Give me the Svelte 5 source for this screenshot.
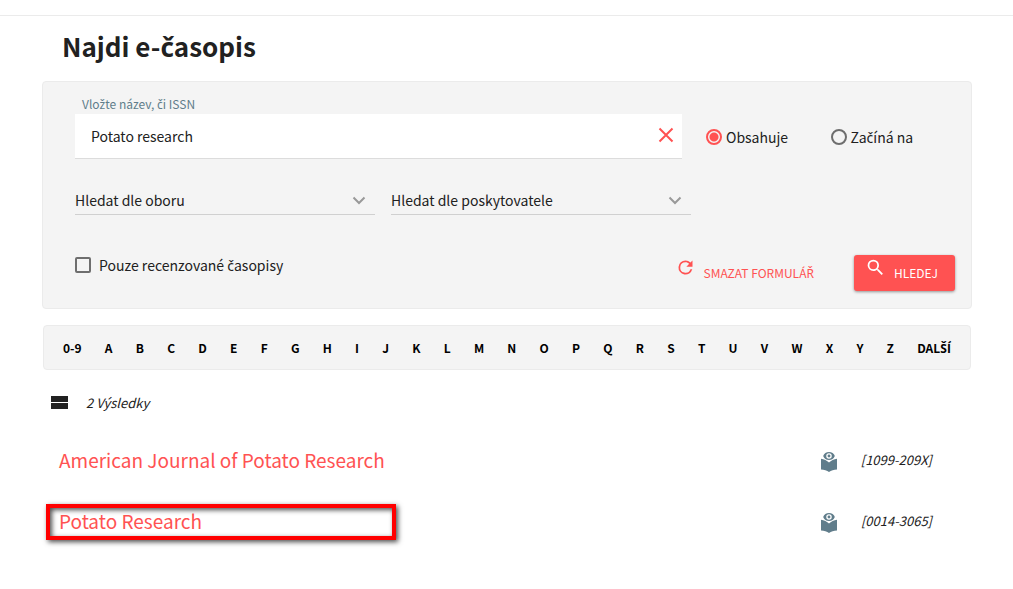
<script lang="ts">
  const letters = ['0-9', ...'ABCDEFGHIJKLMNOPQRSTUVWXYZ', 'DALŠÍ'];

  const results = [
    { title: 'American Journal of Potato Research', issn: '1099-209X', marked: false },
    { title: 'Potato Research', issn: '0014-3065', marked: true }
  ];

  let query = $state('Potato research');
  let mode = $state('contains');
  let field = $state('');
  let provider = $state('');
  let peerReviewed = $state(false);

  // The main font has no letters with a caron, so those get their own family
  const splitCarons = (text: string) => text.split(/([čďěňřšťžČĎĚŇŘŠŤŽ])/);

  function clearForm() {
    query = '';
    mode = 'contains';
    field = '';
    provider = '';
    peerReviewed = false;
  }
</script>

{#snippet czech(text: string)}
  <span>{#each splitCarons(text) as part, i}{#if i % 2}<span class="caron">{part}</span>{:else}{part}{/if}{/each}</span>
{/snippet}

<div class="topline"></div>

<main>
  <h1>{@render czech('Najdi e-časopis')}</h1>

  <form class="panel" onsubmit={(e) => e.preventDefault()}>
    <label class="query-label" for="query">{@render czech('Vložte název, či ISSN')}</label>
    <div class="query-row">
      <div class="query-field">
        <input id="query" type="text" bind:value={query} />
        <button type="button" class="clear" aria-label="Vymazat" onclick={() => (query = '')}>
          <svg width="24" height="24" viewBox="0 0 24 24">
            <path d="M5.5 5.5l13 13M18.5 5.5l-13 13" fill="none" stroke="currentColor" stroke-width="2" />
          </svg>
        </button>
      </div>
      <div class="modes">
        <label class="choice">
          <input type="radio" name="mode" value="contains" bind:group={mode} />
          {@render czech('Obsahuje')}
        </label>
        <label class="choice">
          <input type="radio" name="mode" value="starts" bind:group={mode} />
          {@render czech('Začíná na')}
        </label>
      </div>
    </div>

    <div class="selects">
      <div class="select-wrap">
        <select bind:value={field} aria-label="Hledat dle oboru">
          <option value="">Hledat dle oboru</option>
        </select>
        <svg class="chevron" width="14" height="9" viewBox="0 0 14 9">
          <path d="M1.5 1.5L7 7l5.5-5.5" fill="none" stroke="currentColor" stroke-width="2" />
        </svg>
      </div>
      <div class="select-wrap">
        <select bind:value={provider} aria-label="Hledat dle poskytovatele">
          <option value="">Hledat dle poskytovatele</option>
        </select>
        <svg class="chevron" width="14" height="9" viewBox="0 0 14 9">
          <path d="M1.5 1.5L7 7l5.5-5.5" fill="none" stroke="currentColor" stroke-width="2" />
        </svg>
      </div>
    </div>

    <div class="actions">
      <label class="check">
        <input type="checkbox" bind:checked={peerReviewed} />
        {@render czech('Pouze recenzované časopisy')}
      </label>
      <button type="button" class="btn" onclick={clearForm}>
        <svg width="21" height="21" viewBox="0 0 24 24">
          <path fill="currentColor" d="M17.65 6.35A7.96 7.96 0 0 0 12 4a8 8 0 1 0 7.73 10h-2.08A6 6 0 1 1 12 6c1.66 0 3.14.69 4.22 1.78L13 11h7V4l-2.35 2.35z" />
        </svg>
        <span class="btn-text">{@render czech('SMAZAT FORMULÁŘ')}</span>
      </button>
      <button type="submit" class="btn primary">
        <svg width="21" height="21" viewBox="0 0 24 24">
          <path fill="currentColor" d="M15.5 14h-.79l-.28-.27A6.47 6.47 0 0 0 16 9.5 6.5 6.5 0 1 0 9.5 16c1.61 0 3.09-.59 4.23-1.57l.27.28v.79l5 4.99L20.49 19l-4.99-5zm-6 0a4.5 4.5 0 1 1 0-9 4.5 4.5 0 0 1 0 9z" />
        </svg>
        <span class="btn-text">HLEDEJ</span>
      </button>
    </div>
  </form>

  <nav class="letters">
    {#each letters as letter}
      <a href="#{letter}">{@render czech(letter)}</a>
    {/each}
  </nav>

  <div class="summary">
    <svg width="17" height="15" viewBox="0 0 17 15">
      <path d="M0 0h17v6H0zM0 7h17v6H0z" fill="#212121" />
    </svg>
    <em>2 Výsledky</em>
  </div>

  <ul class="results">
    {#each results as result}
      <li class:marked={result.marked}>
        <a href="#{result.issn}">{result.title}</a>
        <svg width="16" height="20" viewBox="0 0 16 20">
          <path d="M8 0C5.2 0 3.1 1.6 2.2 4 3.1 6.4 5.2 8 8 8s4.900-1.600 5.800-4C12.900 1.600 10.800 0 8 0z" fill="#607d8b" />
          <circle cx="8" cy="4" r="2.1" fill="#607d8b" stroke="#fff" stroke-width="1.3" />
          <path d="M0 6.800c3 .4 6 1.800 8 3.800 2-2 5-3.400 8-3.800v10.700c-3 .3-6 1.200-8 2.500-2-1.300-5-2.200-8-2.500z" fill="#607d8b" />
        </svg>
        <em>[{result.issn}]</em>
      </li>
    {/each}
  </ul>
</main>

<style>
  :global(body) {
    background: #fff;
    color: #212121;
    font-family: 'Noto Sans CJK JP', 'Noto Sans', sans-serif;
    font-size: 14px;
    line-height: 20px;
  }

  .caron {
    font-family: 'Noto Sans', sans-serif;
    line-height: 1;
  }

  .topline {
    height: 15px;
    border-bottom: 1px solid #ebebeb;
  }

  main {
    padding: 0 41px 0 42px;
  }

  h1 {
    margin: 0;
    padding: 10px 20px 15px;
    font-size: 26px;
    line-height: 40px;
    font-weight: 700;
  }

  .panel {
    padding: 12px 16px 17px 32px;
    background: #f4f4f4;
    border: 1px solid #ebebeb;
    border-radius: 4px;
  }

  input,
  select,
  button {
    font: inherit;
    color: inherit;
    margin: 0;
  }

  .query-label {
    display: block;
    padding: 0 7px 1px;
    font-size: 12px;
    line-height: 19px;
    color: #607d8b;
  }

  .query-row {
    display: flex;
    align-items: center;
    gap: 24px;
  }

  .query-field {
    display: flex;
    flex: 1;
    align-items: center;
    height: 44px;
    background: #fff;
    border-bottom: 1px solid #dcdcdc;
  }

  .query-field input {
    flex: 1;
    min-width: 0;
    padding: 0 16px;
    border: 0;
    outline: 0;
    background: none;
  }

  .clear {
    display: flex;
    padding: 0 4px 2px;
    border: 0;
    background: none;
    color: #ff5252;
    cursor: pointer;
  }

  .modes {
    display: grid;
    grid-template-columns: 1fr 1fr;
    width: 249px;
  }

  .choice,
  .check {
    display: flex;
    align-items: center;
  }

  .choice {
    gap: 4px;
  }

  .check {
    flex: 1;
    align-self: flex-start;
    gap: 8px;
  }

  input[type='radio'],
  input[type='checkbox'] {
    appearance: none;
    width: 16px;
    height: 16px;
    border: 2px solid #6e6e6e;
    border-radius: 2px;
  }

  input[type='radio'] {
    border-radius: 50%;
  }

  input[type='radio']:checked {
    border-color: #ff5252;
    background: radial-gradient(circle, #ff5252 4px, transparent 5px);
  }

  input[type='checkbox']:checked {
    border-color: #ff5252;
    background: #ff5252;
  }

  .selects {
    display: flex;
    gap: 16px;
    margin-top: 27px;
  }

  .select-wrap {
    position: relative;
    flex: 0 1 300px;
  }

  select {
    appearance: none;
    display: block;
    width: 100%;
    height: 29px;
    padding: 0;
    border: 0;
    border-bottom: 1px solid #d0d0d0;
    border-radius: 0;
    background: none;
  }

  .chevron {
    position: absolute;
    top: 10px;
    right: 9px;
    color: #999;
    pointer-events: none;
  }

  .actions {
    display: flex;
    gap: 28px;
    margin-top: 40px;
  }

  .btn {
    display: flex;
    gap: 8px;
    height: 36px;
    padding: 2px 12px;
    border: 0;
    border-radius: 2px;
    background: none;
    color: #ff5252;
    font-size: 12px;
    cursor: pointer;
  }

  .btn-text {
    padding-top: 6px;
  }

  .primary {
    background: #ff5252;
    color: #fff;
    padding: 2px 17px 2px 11px;
    border-radius: 3px;
    box-shadow: 0 1px 3px rgba(0, 0, 0, 0.4);
  }

  .letters {
    display: flex;
    justify-content: space-between;
    margin: 16px 1px 0;
    padding: 12px 19px 11px;
    background: #f4f4f4;
    border: 1px solid #ebebeb;
    border-radius: 4px;
    font-size: 12px;
    font-weight: 700;
  }

  .letters a {
    color: #000;
    text-decoration: none;
  }

  .summary {
    display: flex;
    align-items: center;
    gap: 18px;
    padding: 23px 9px 0;
    font-size: 13px;
  }

  .results {
    list-style: none;
    margin: 16px 0 0;
    padding: 0;
  }

  li {
    position: relative;
    display: flex;
    align-items: center;
    height: 61px;
    padding: 0 40px 0 17px;
    font-size: 13px;
  }

  li a {
    flex: 1;
    color: #ff5252;
    font-size: 19px;
    text-decoration: none;
  }

  li svg {
    margin-top: 4px;
  }

  li em {
    margin-left: 24px;
  }

  .marked::after {
    content: '';
    position: absolute;
    top: 14px;
    left: 4px;
    width: 342px;
    height: 28px;
    border: 4px solid #f00;
    box-shadow: 2px 2px 5px rgba(0, 0, 0, 0.7), inset 2px 2px 5px rgba(0, 0, 0, 0.7);
    pointer-events: none;
  }
</style>
